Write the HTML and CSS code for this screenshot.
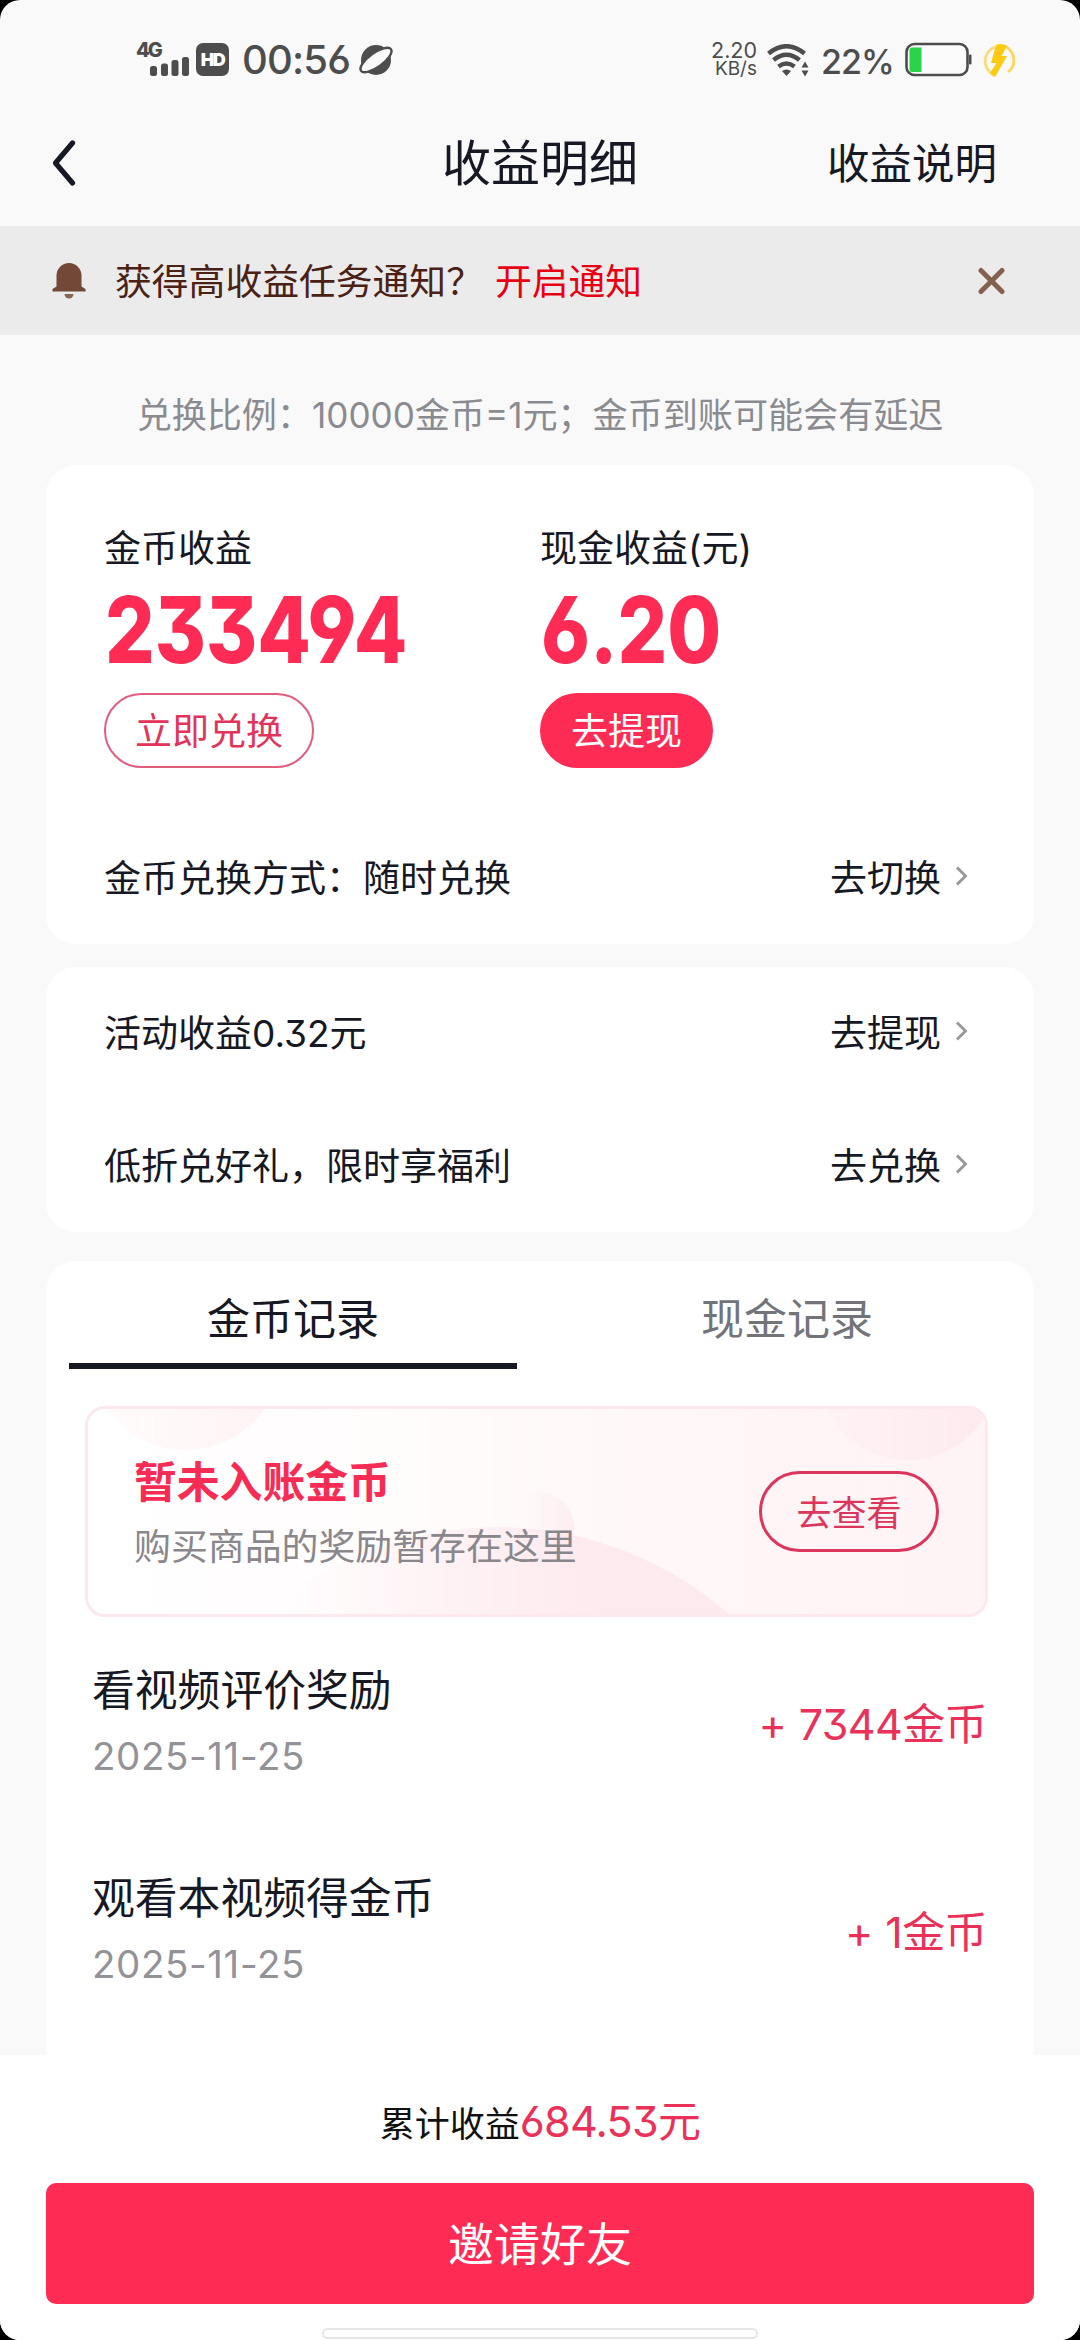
FILE: index.html
```html
<!DOCTYPE html>
<html lang="zh-CN">
<head>
<meta charset="utf-8">
<title>收益明细</title>
<link rel="stylesheet" href="styles.css">
</head>
<body>
<div class="phone">
  <div class="screen">
    <div class="status">
      <div class="status-left">
        <div class="cell"><span class="sig-label">4G</span><svg class="signal" width="40" height="20" viewBox="0 0 40 20"><g fill="#4d4d4d"><rect x="0" y="10" width="7" height="10" rx="2.5"/><rect x="11" y="7.500" width="7" height="12.500" rx="2.5"/><rect x="21.500" y="4" width="7" height="16" rx="2.5"/><rect x="32" y="1" width="7" height="19" rx="2.5"/></g></svg></div>
        <span class="hd">HD</span>
        <span class="clock">00:56</span>
        <svg class="planet" width="34" height="34" viewBox="0 0 34 34"><circle cx="17" cy="17" r="15" fill="#4d4d4d"/><ellipse cx="17" cy="17" rx="18.500" ry="7" transform="rotate(-36 17 17)" fill="#f9f9f9" stroke="#4d4d4d" stroke-width="2.400"/></svg>
      </div>
      <div class="status-right">
        <div class="speed"><span>2.20</span><span class="unit">KB/s</span></div>
        <svg class="wifi" width="42" height="34" viewBox="0 0 42 34"><g fill="none" stroke="#4d4d4d" stroke-width="4.500"><path d="M1.500 9.500Q19.500-5 37.500 9.500"/><path d="M6.500 16Q19.500 5.500 32.500 16"/><path d="M11.500 22.500Q19.500 16.500 27.500 22.500"/></g><path d="M15 27Q19.500 24 24 27L19.500 32Z" fill="#4d4d4d"/><path d="M34.500 23.500h7L38 17.500ZM34.500 26.500h7L38 32.500Z" fill="#4d4d4d"/></svg>
        <span class="percent">22%</span>
        <svg class="battery" width="67" height="36" viewBox="0 0 67 36"><rect x="1.500" y="2" width="61" height="31" rx="8" fill="#fbfbfb" stroke="#4d4d4d" stroke-width="2.600"/><path d="M7 5.500h9.500v24.500H7a2.500 2.500 0 0 1-2.500-2.500V8A2.500 2.500 0 0 1 7 5.500Z" fill="#2bd24a"/><rect x="64" y="12.500" width="2.500" height="10" rx="1" fill="#4d4d4d"/></svg>
        <svg class="bolt" width="32" height="36" viewBox="0 0 32 36"><path d="M19 2.500A15 15 0 0 1 25 29" fill="none" stroke="#fbd65a" stroke-width="2.800"/><path d="M12 4A15 15 0 0 0 6 28L11 33" fill="none" stroke="#fbdc7a" stroke-width="2.800"/><path d="M13 2Q19-.500 24 3L18.500 13H24L12 34L7 30L13.500 20H8Z" fill="#fdcb12"/></svg>
      </div>
    </div>

    <header class="nav">
      <svg class="back" width="26" height="50" viewBox="0 0 26 50"><path d="M20.500 5L3.500 25L20.500 45" fill="none" stroke="#161823" stroke-width="5.200" stroke-linecap="round" stroke-linejoin="round"/></svg>
      <h1 class="nav-title">收益明细</h1>
      <a class="nav-link">收益说明</a>
    </header>

    <div class="notice">
      <svg class="bell" width="36" height="38" viewBox="0 0 36 38"><path d="M18 1A12.500 12.500 0 0 1 30.500 13.500V24.500L34.500 27V29.500H1.500V27L5.500 24.500V13.500A12.500 12.500 0 0 1 18 1Z" fill="#734837"/><path d="M13.500 32h9a4.500 4.500 0 0 1-9 0Z" fill="#8a6556"/></svg>
      <span class="notice-text">获得高收益任务通知？</span>
      <a class="notice-link">开启通知</a>
      <svg class="close" width="28" height="28" viewBox="0 0 28 28"><path d="M4 3.500L25 24.500M25 3.500L4 24.500" stroke="#85604f" stroke-width="5" stroke-linecap="round"/></svg>
    </div>

    <main class="content">
      <p class="ratio">兑换比例：10000金币=1元；金币到账可能会有延迟</p>

      <section class="card income">
        <div class="balances">
          <div class="balance"><span class="label">金币收益</span><strong class="figure">233494</strong><a class="pill">立即兑换</a></div>
          <div class="balance"><span class="label">现金收益(元)</span><strong class="figure">6.20</strong><a class="pill pill-solid">去提现</a></div>
        </div>
        <div class="row"><span>金币兑换方式：随时兑换</span><a class="more">去切换<svg width="13" height="20" viewBox="0 0 13 20"><path d="M2 1.500L10.500 10L2 18.500" fill="none" stroke="#96979b" stroke-width="2.800"/></svg></a></div>
      </section>

      <section class="card extras">
        <div class="row"><span>活动收益0.32元</span><a class="more">去提现<svg width="13" height="20" viewBox="0 0 13 20"><path d="M2 1.500L10.500 10L2 18.500" fill="none" stroke="#96979b" stroke-width="2.800"/></svg></a></div>
        <div class="row"><span>低折兑好礼，限时享福利</span><a class="more">去兑换<svg width="13" height="20" viewBox="0 0 13 20"><path d="M2 1.500L10.500 10L2 18.500" fill="none" stroke="#96979b" stroke-width="2.800"/></svg></a></div>
      </section>

      <section class="card records">
        <nav class="tabs"><a class="tab tab-on">金币记录</a><a class="tab">现金记录</a></nav>
        <div class="pending">
          <svg class="pending-art" viewBox="0 0 903 211" preserveAspectRatio="none">
            <defs>
              <linearGradient id="base"><stop offset="0" stop-color="#fff"/><stop offset=".35" stop-color="#fffcfc"/><stop offset=".75" stop-color="#fff5f6"/><stop offset="1" stop-color="#fff4f5"/></linearGradient>
              <linearGradient id="hill"><stop offset=".2" stop-color="#fdeaef" stop-opacity="0"/><stop offset=".65" stop-color="#fdeaef"/></linearGradient>
              <linearGradient id="fade"><stop offset="0" stop-color="#fde9ee" stop-opacity=".15"/><stop offset="1" stop-color="#fde9ee"/></linearGradient>
              <linearGradient id="bubble"><stop offset=".3" stop-color="#fdeff2" stop-opacity="0"/><stop offset="1" stop-color="#fdedf1"/></linearGradient>
              <linearGradient id="fadeSoft"><stop offset="0" stop-color="#fff3f4" stop-opacity=".2"/><stop offset="1" stop-color="#fff2f4"/></linearGradient>
            </defs>
            <rect width="903" height="211" fill="url(#base)"/>
            <circle cx="101" cy="-51" r="95" fill="url(#fadeSoft)"/>
            <circle cx="823" cy="-36" r="90" fill="url(#fade)"/>
            <circle cx="453" cy="122" r="36" fill="url(#bubble)"/>
            <circle cx="412" cy="473" r="352" fill="url(#hill)"/>
          </svg>
          <div class="pending-text"><strong>暂未入账金币</strong><span>购买商品的奖励暂存在这里</span></div>
          <a class="check">去查看</a>
        </div>
        <div class="record"><div class="record-info"><span>看视频评价奖励</span><time>2025-11-25</time></div><span class="amount">+ 7344金币</span></div>
        <div class="record"><div class="record-info"><span>观看本视频得金币</span><time>2025-11-25</time></div><span class="amount">+ 1金币</span></div>
      </section>
    </main>

    <footer class="bottom">
      <p class="total">累计收益<span>684.53元</span></p>
      <a class="invite">邀请好友</a>
      <div class="home-bar"></div>
    </footer>
  </div>
</div>
</body>
</html>
```

FILE: styles.css
```css
* { box-sizing: border-box; }
body { margin: 0; background: #000; }
.phone { width: 1080px; height: 2340px; overflow: hidden; background: #000; }
.screen {
  display: flex; flex-direction: column; width: 1080px; height: 2340px;
  overflow: hidden; border-radius: 20px; background: #f9f9f9; color: #161823;
  font-family: Inter, "Noto Sans CJK SC", sans-serif;
  font-feature-settings: "cv03", "cv04", "cv09";
}

.status { display: flex; justify-content: space-between; height: 102px; padding: 0 65px 0 136px; color: #4d4d4d; flex: none; }
.status-left, .status-right { display: flex; align-items: flex-start; }
.cell { display: grid; width: 54px; height: 36px; margin-top: 40px; }
.cell > * { grid-area: 1 / 1; }
.sig-label { font-size: 20px; font-weight: 800; line-height: 20px; letter-spacing: -2px; }
.signal { align-self: end; justify-self: end; }
.hd { width: 33px; height: 33px; margin: 43px 0 0 6px; border-radius: 7px; background: #4d4d4d; color: #fff; font-size: 18px; font-weight: 900; line-height: 34px; text-align: center; letter-spacing: -1.500px; }
.clock { margin: 35px 0 0 13px; width: 105px; font-size: 40px; font-weight: 450; line-height: 50px; white-space: nowrap; letter-spacing: -.8px; }
.planet { margin: 43px 0 0 12px; overflow: visible; }
.speed { display: flex; flex-direction: column; width: 48px; margin-top: 41px; font-size: 21.500px; line-height: 19px; white-space: nowrap; text-align: right; }
.unit { font-size: 19px; line-height: 17px; }
.wifi { margin: 44px 0 0 10px; }
.percent { width: 72px; margin: 38px 0 0 12px; font-size: 34px; font-weight: 500; line-height: 48px; letter-spacing: -1px; white-space: nowrap; }
.battery { margin: 42px 0 0 12px; }
.bolt { margin: 43px 0 0 11px; }

.nav { display: grid; grid-template-columns: 1fr auto 1fr; align-items: center; height: 124px; padding: 0 83px 0 52px; flex: none; }
.back { position: relative; top: -1px; }
.nav-title { margin: 0 0 0 31px; font-size: 49px; font-weight: 400; line-height: 70px; }
.nav-link { justify-self: end; font-size: 42.500px; line-height: 60px; }

.notice { display: flex; align-items: center; height: 109px; padding: 0 75px 0 51px; background: #ebebeb; color: #4a2114; font-size: 36.800px; flex: none; }
.notice-text, .notice-link { padding-bottom: 3px; }
.notice-text { margin-left: 28px; }
.notice-link { margin-left: 12px; color: #e60012; }
.close { margin-left: auto; }

.content { flex: 1; min-height: 0; overflow: hidden; padding: 0 46px; }
.ratio { margin: 54px 0 23px; height: 53px; color: #8a8b90; font-size: 35.100px; line-height: 53px; text-align: center; white-space: nowrap; }
.card { border-radius: 30px; background: #fff; }
.label, .row { font-size: 37px; }
.income { height: 479px; padding: 59px 58px 0; }
.balances { display: grid; grid-template-columns: 436px 1fr; }
.balance { display: flex; flex-direction: column; align-items: flex-start; }
.label { line-height: 50px; }
.figure { margin: 10px 0 0 1px; color: #fe2c55; font-size: 92px; font-weight: 800; line-height: 92px; transform: scaleX(.848); transform-origin: left; }
.pill { display: flex; align-items: center; height: 75px; margin-top: 17px; padding: 0 29px 3px; border: 2px solid #e25c7c; border-radius: 38px; color: #e2345a; font-size: 37px; }
.pill-solid { border-color: #fe2c55; background: #fe2c55; color: #fff; }
.row { display: flex; align-items: center; justify-content: space-between; height: 133px; }
.income .row { height: 100px; margin-top: 58px; }
.more { display: flex; align-items: center; gap: 14px; padding-right: 8px; }
.extras { height: 265px; margin-top: 23px; padding: 0 58px; }
.extras .row { padding-bottom: 5px; }

.records { height: 900px; margin-top: 29px; }
.tabs { display: grid; grid-template-columns: 1fr 1fr; }
.tab { height: 108px; margin: 0 23px; border-bottom: 6px solid transparent; color: #737479; font-size: 43px; line-height: 117px; text-align: center; }
.tab-on { border-color: #161823; color: #161823; }
.pending { position: relative; display: flex; align-items: center; justify-content: space-between; height: 211px; margin: 37px 46px 0 39px; padding: 0 46px; overflow: hidden; border: 3px solid #fde8ed; border-radius: 20px; }
.pending-art { position: absolute; inset: -3px; width: 903px; height: 211px; }
.pending-text, .check { position: relative; }
.pending-text { display: flex; flex-direction: column; padding-top: 6px; }
.pending-text strong { color: #f72c55; font-size: 42.800px; line-height: 64px; }
.pending-text span { color: #8a878c; font-size: 36.900px; line-height: 64px; }
.check { display: flex; align-items: center; justify-content: center; width: 180px; height: 81px; padding-bottom: 2px; border: 3px solid #dc365c; border-radius: 41px; color: #dc365c; font-size: 35px; }
.record { display: flex; align-items: center; justify-content: space-between; height: 208px; padding: 0 47px 0 46px; }
.record-info { display: flex; flex-direction: column; padding-top: 3px; font-size: 42.800px; line-height: 66px; }
.record-info time { color: #929297; font-size: 38.500px; line-height: 64px; letter-spacing: .6px; }
.amount { color: #ea3159; font-size: 43px; letter-spacing: -.6px; word-spacing: 1px; }

.bottom { display: flex; flex-direction: column; align-items: center; height: 285px; background: #fff; flex: none; }
.total { margin: 36px 0 32px; height: 60px; color: #111; font-size: 35px; line-height: 60px; white-space: nowrap; }
.total span { color: #ea3159; font-size: 43px; letter-spacing: -.7px; }
.invite { display: flex; align-items: center; justify-content: center; width: 988px; height: 121px; padding-bottom: 5px; border-radius: 10px; background: #fe2c55; color: #fff; font-size: 46px; }
.home-bar { width: 436px; height: 11px; margin-top: 24px; border: 2px solid #e6e6e6; border-radius: 6px; }
```
